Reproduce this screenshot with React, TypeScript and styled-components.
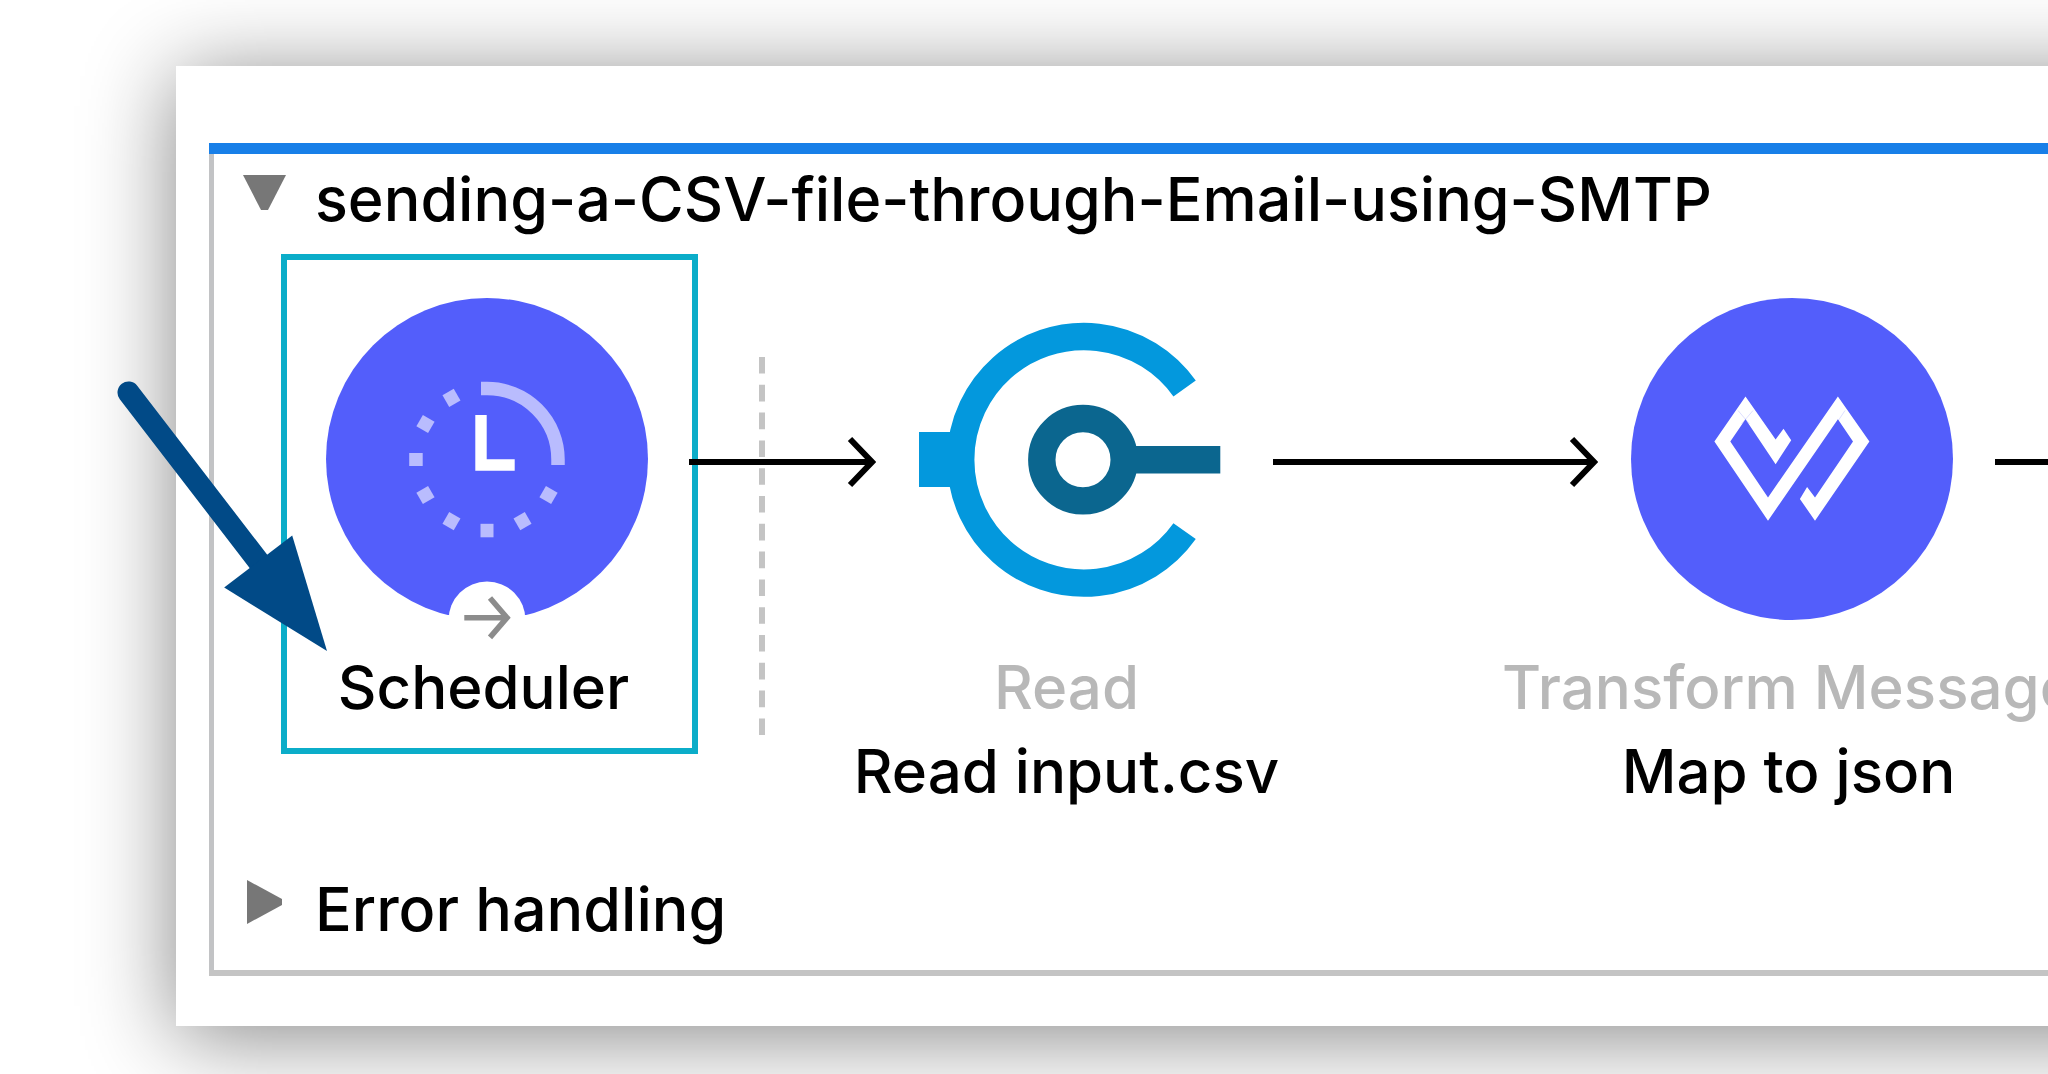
import React, { useState } from "react";
import styled, { createGlobalStyle } from "styled-components";

const GlobalStyle = createGlobalStyle`
  * { box-sizing: border-box; }
  body {
    margin: 0;
    background: #fff;
    color: #000;
    font-family: Inter, "Liberation Sans", sans-serif;
    overflow-x: hidden;
  }
`;

const Page = styled.main`
  position: relative;
  padding: 66px 0 48px 176px;
  overflow: hidden;
`;

const Panel = styled.section`
  padding: 77px 0 50px 33px;
  margin-right: -200px;
  background: #fff;
  box-shadow: 0 10px 84px rgba(0, 0, 0, 0.48);
`;

const Flow = styled.article`
  border-top: 11px solid #187fe8;
  padding-bottom: 25px;
  position: relative;
  background: linear-gradient(#c2c3c5, #c2c3c5) left / 5px 100% no-repeat;
  border-bottom: 6px solid #c4c4c4;
`;

const Toggle = styled.button`
  display: flex;
  align-items: center;
  gap: 28px;
  padding: 0 0 0 32px;
  border: 0;
  background: none;
  color: inherit;
  font: 500 61px/72px Inter, "Liberation Sans", sans-serif;
  white-space: nowrap;
`;

const TitleRow = styled.header`
  padding-top: 9px;
`;

const FooterRow = styled.footer`
  padding-top: 48px;
`;

const Triangle = styled.svg`
  width: 46px;
  height: 46px;
  margin-bottom: 14px;
  flex: none;
`;

const Steps = styled.div`
  display: flex;
  align-items: flex-start;
  padding: 19px 0 0 72px;
`;

const Step = styled.button<{ $selected?: boolean }>`
  display: flex;
  flex: none;
  flex-direction: column;
  align-items: center;
  width: ${(p) => (p.$selected ? 417 : 387)}px;
  height: ${(p) => (p.$selected ? 500 : 571)}px;
  padding: ${(p) => (p.$selected ? "38px 6px 0 0" : "44px 0 0")};
  border: ${(p) => (p.$selected ? "6px solid #0badc9" : "0")};
  background: none;
  color: inherit;
  font: 500 60px/84px Inter, "Liberation Sans", sans-serif;
  white-space: nowrap;
`;

const StepIcon = styled.svg`
  flex: none;
  height: 322px;
  margin-bottom: 25px;
  overflow: visible;
`;

const StepLabel = styled.span<{ $muted?: boolean }>`
  padding-right: 6px;
  color: ${(p) => (p.$muted ? "#b8b8b8" : "#000")};
`;

const Connector = styled.div<{ $overlap?: boolean }>`
  position: relative;
  flex: none;
  width: ${(p) => (p.$overlap ? 187 : 325)}px;
  margin: 180px 0 0 ${(p) => (p.$overlap ? -9 : 10)}px;
`;

const ConnectorLine = styled.svg`
  position: relative;
  display: block;
  height: 56px;
`;

const SourceDivider = styled.svg`
  position: absolute;
  left: 70px;
  top: -77px;
  width: 6px;
  height: 378px;
`;

const Pointer = styled.svg`
  position: absolute;
  left: 110px;
  top: 370px;
  width: 230px;
  height: 290px;
  pointer-events: none;
`;

const Arrow = ({ length }: { length: number }) => (
  <ConnectorLine width={length} viewBox={`0 0 ${length} 56`} fill="none" stroke="#000" strokeWidth="6" aria-hidden="true">
    <path d={`M0 28H${length - 4}M${length - 26} 5L${length - 4} 28L${length - 26} 51`} />
  </ConnectorLine>
);

const SchedulerIcon = () => (
  <StepIcon width="322" viewBox="0 0 322 322" aria-hidden="true">
    <circle cx="161" cy="161" r="161" fill="#535efb" />
    <path d="M155 90.5H161A71 71 0 0 1 232 161.5V167" fill="none" stroke="#b9bcfe" strokeWidth="13.5" />
    {[120, 150, 180, 210, 240, 270, 300, 330].map((angle) => (
      <rect key={angle} x="154.5" y="83.7" width="13" height="13.5" fill="#b9bcfe" transform={`rotate(${angle} 161 161.5)`} />
    ))}
    <path d="M149.3 117h11.4v44.3h28v11.4h-39.4z" fill="#fff" />
    <circle cx="161" cy="322" r="38.5" fill="#fff" />
    <rect x="90" y="317" width="142" height="8" fill="#fff" />
    <path d="M138.3 319.7H181M164 300L181 319.7L164 339.4" fill="none" stroke="#8c8c8c" strokeWidth="5.6" />
  </StepIcon>
);

const ReadIcon = () => (
  <StepIcon width="302" viewBox="0 0 302 322" aria-hidden="true">
    <path
      d="M265.6 90.5A123.3 123.3 0 1 0 265.6 233.1"
      fill="none"
      stroke="#0398dd"
      strokeWidth="27.4"
    />
    <path d="M0 134H45V189H0z" fill="#0398dd" />
    <circle cx="164" cy="161.7" r="41.2" fill="none" stroke="#0b668f" strokeWidth="27.4" />
    <path d="M214 148H301.3V175.6H214z" fill="#0b668f" />
  </StepIcon>
);

const TransformIcon = () => (
  <StepIcon width="322" viewBox="0 0 322 322" aria-hidden="true">
    <circle cx="161" cy="161" r="161" fill="#535efb" />
    <path
      fill="#fff"
      d="M114.5 98.6L144.6 141.6L152.5 130.7L160.2 142.2L144.6 166.2L114.5 121.3L99.3 143.6L137 199.4L206.9 98.6L238.4 143.6L184 222.7L168.9 201L176.1 188.9L184 199.4L222 143.6L206.9 121.3L137 222.7L83.4 143.6Z"
    />
    <path d="M107 112.500L118.500 126M122 112.500L110.500 126M214 112.500L207 123" stroke="#535efb" strokeOpacity="0.2" strokeWidth="1" />
  </StepIcon>
);

export default function App() {
  const [open, setOpen] = useState(true);
  const [errorsOpen, setErrorsOpen] = useState(false);

  return (
    <>
      <GlobalStyle />
      <Page>
        <Panel>
          <Flow>
            <TitleRow>
              <Toggle aria-expanded={open} onClick={() => setOpen(!open)}>
                <Triangle viewBox="0 0 46 46" fill="#777" aria-hidden="true">
                  <path d="M2 6H45L27 41H20z" />
                </Triangle>
                sending-a-CSV-file-through-Email-using-SMTP
              </Toggle>
            </TitleRow>
            {open && (
              <Steps>
                <Step $selected>
                  <SchedulerIcon />
                  <StepLabel>Scheduler</StepLabel>
                </Step>
                <Connector $overlap>
                  <SourceDivider viewBox="0 0 6 378" aria-hidden="true">
                    <path d="M3 0V378" stroke="#c4c4c4" strokeWidth="6" strokeDasharray="16.600 11.200" />
                  </SourceDivider>
                  <Arrow length={187} />
                </Connector>
                <Step>
                  <ReadIcon />
                  <StepLabel $muted>Read</StepLabel>
                  <StepLabel>Read input.csv</StepLabel>
                </Step>
                <Connector>
                  <Arrow length={325} />
                </Connector>
                <Step>
                  <TransformIcon />
                  <StepLabel $muted>Transform Message</StepLabel>
                  <StepLabel>Map to json</StepLabel>
                </Step>
                <Connector>
                  <Arrow length={325} />
                </Connector>
              </Steps>
            )}
            <FooterRow>
              <Toggle aria-expanded={errorsOpen} onClick={() => setErrorsOpen(!errorsOpen)}>
                <Triangle viewBox="0 0 46 46" fill="#777" aria-hidden="true">
                  <path d="M6 1L41 20V26L6 45z" />
                </Triangle>
                Error handling
              </Toggle>
            </FooterRow>
          </Flow>
        </Panel>
        <Pointer viewBox="110 370 230 290" fill="#014a87" aria-hidden="true">
          <path d="M128.500 392.500L262 566" stroke="#014a87" strokeWidth="22" strokeLinecap="round" />
          <path d="M327 651L292.200 535.500L224.200 587.500z" />
        </Pointer>
      </Page>
    </>
  );
}
